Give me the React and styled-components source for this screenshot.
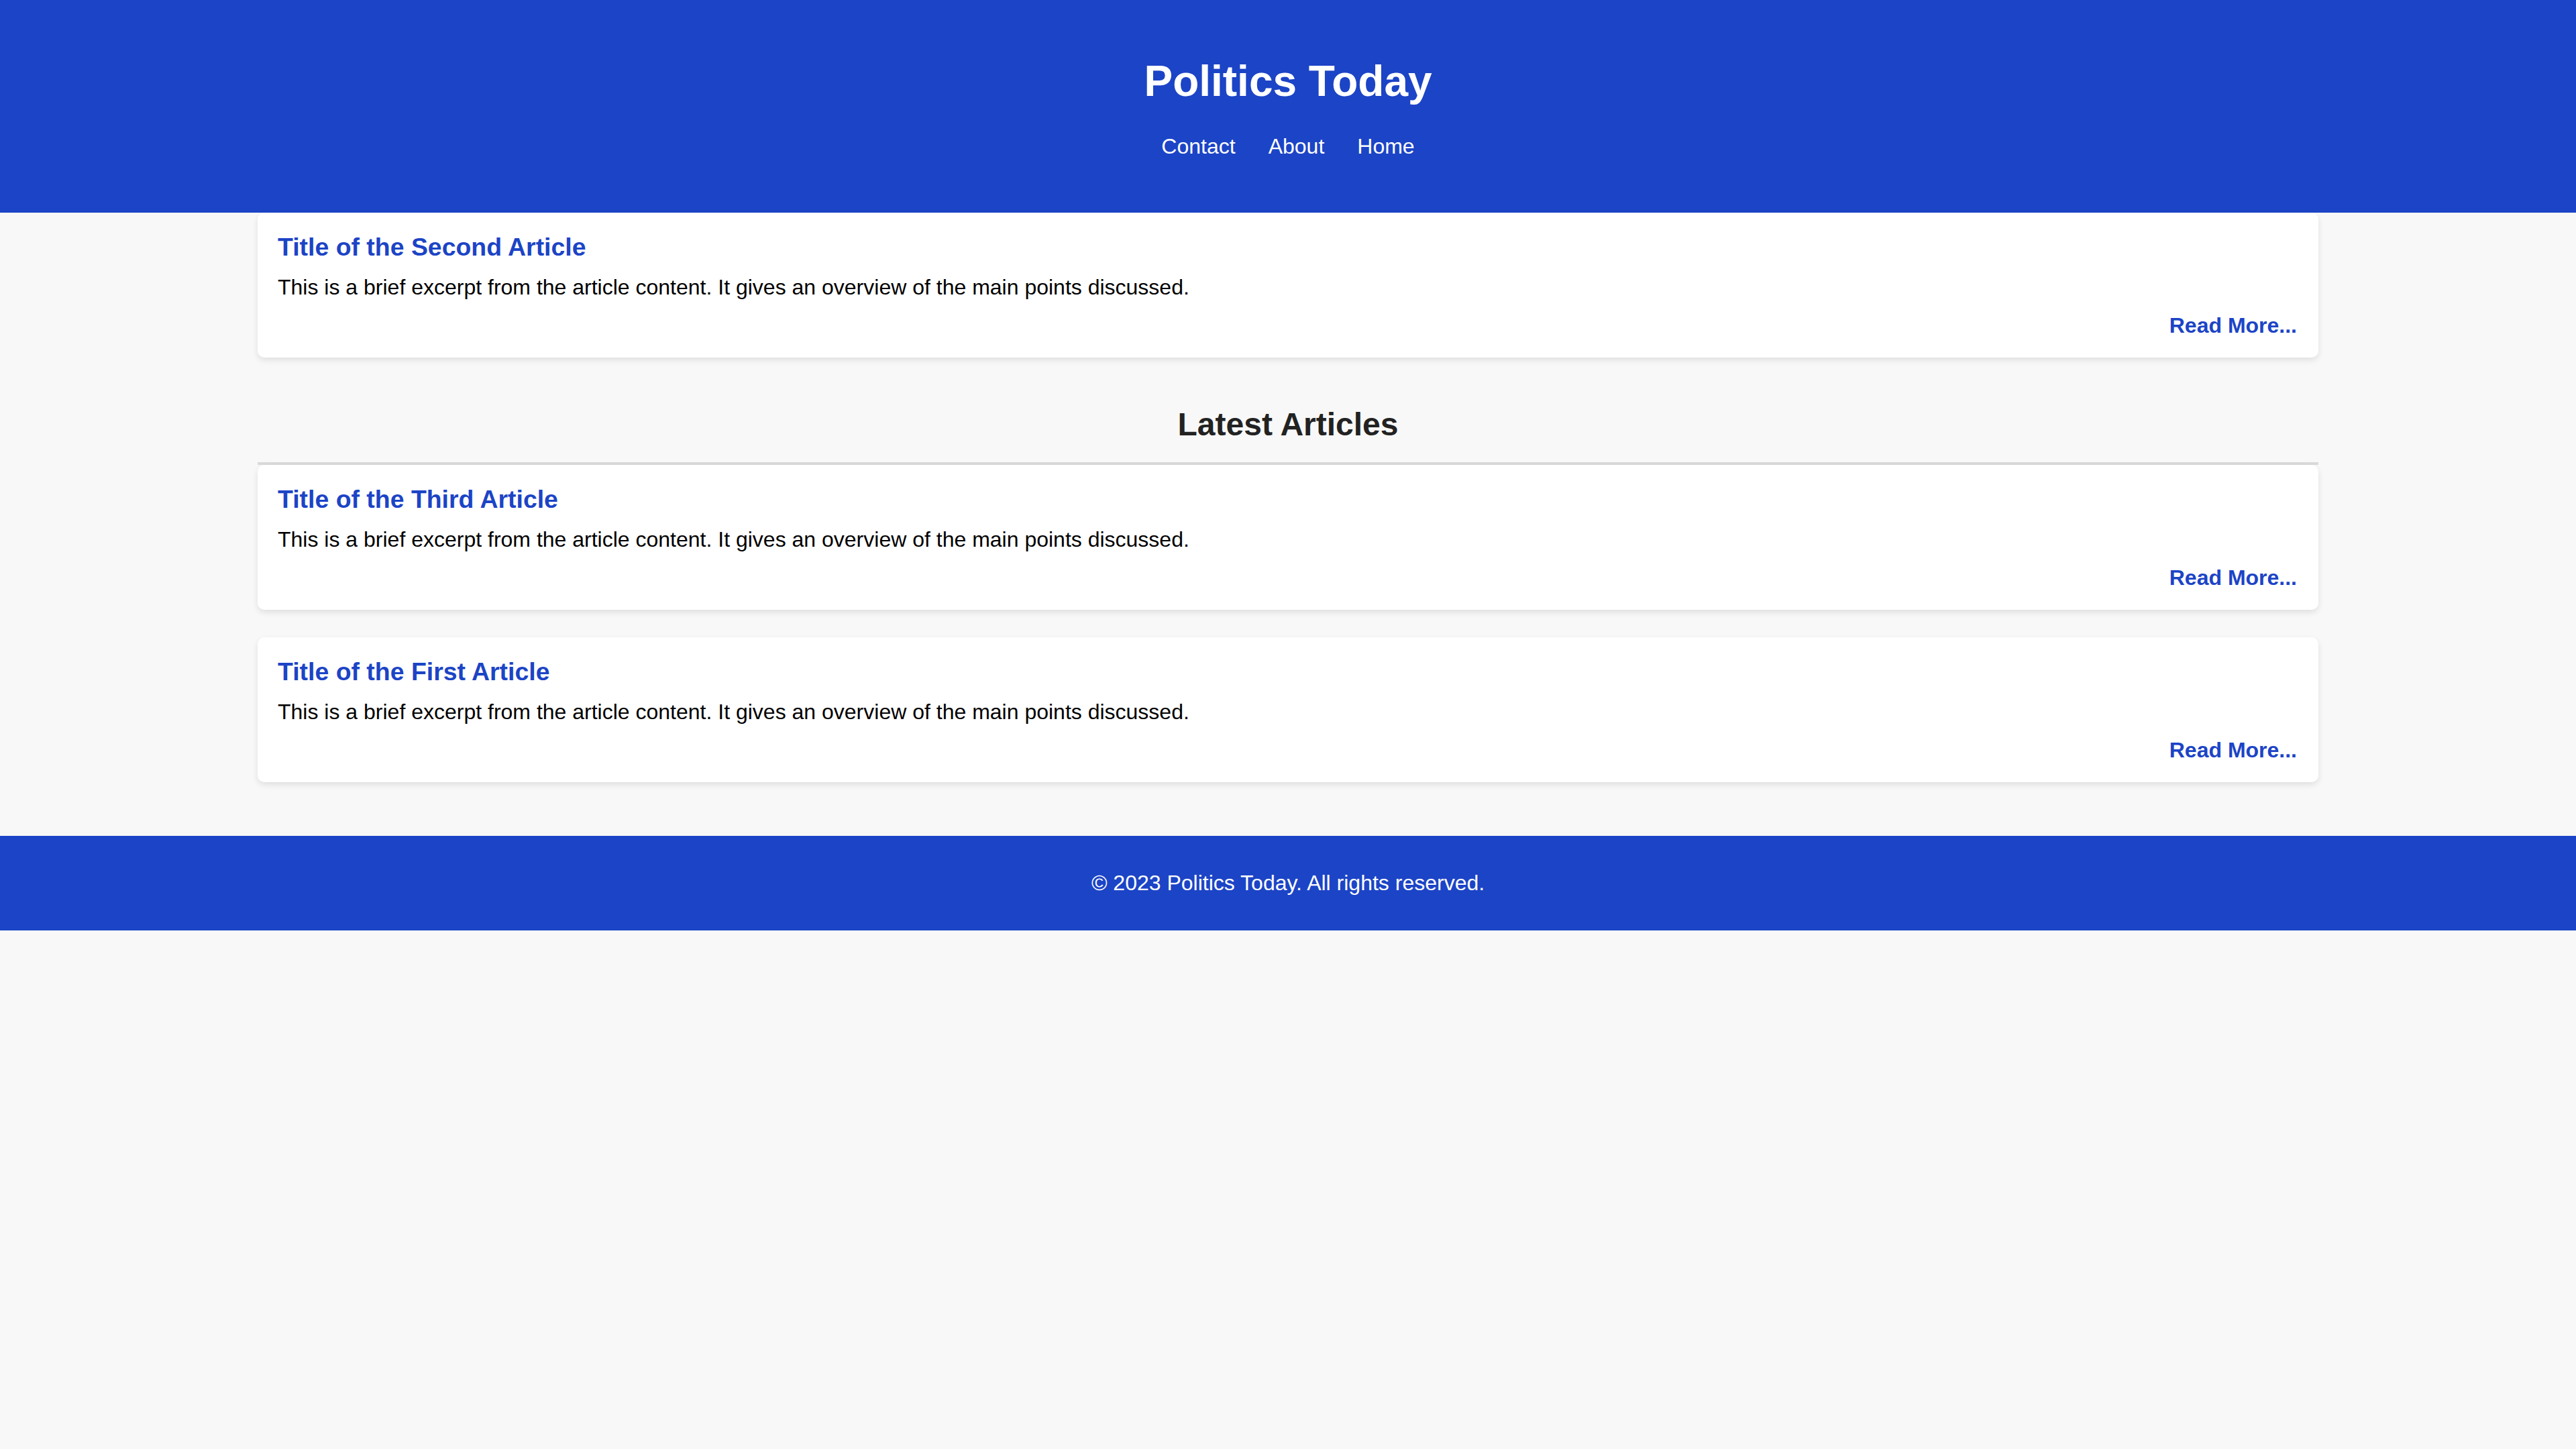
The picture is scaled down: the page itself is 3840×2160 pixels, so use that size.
import React from "react";
import styled, { createGlobalStyle } from "styled-components";

const BLUE = "#1c44c6";

const GlobalStyle = createGlobalStyle`
  html, body {
    margin: 0;
    padding: 0;
    background: #f8f8f8;
  }
  body {
    font-family: "Liberation Sans", Arial, Helvetica, sans-serif;
    color: #000;
  }
  * { box-sizing: border-box; }
`;

const Header = styled.header`
  background: ${BLUE};
  color: #fff;
  text-align: center;
  padding: 84px 0 81px;
`;

const SiteTitle = styled.h1`
  margin: 0 0 42px;
  font-size: 64px;
  line-height: 74px;
  font-weight: 700;
`;

const Nav = styled.nav`
  display: flex;
  justify-content: center;
  gap: 49px;
`;

const NavLink = styled.a`
  color: #fff;
  text-decoration: none;
  font-size: 32px;
  line-height: 36px;
`;

const Main = styled.main`
  width: 3072px;
  margin: 0 auto;
  padding: 0 0 80px;
`;

const Card = styled.article`
  background: #fff;
  border-radius: 10px;
  box-shadow: 0 4px 10px rgba(0, 0, 0, 0.1);
  padding: 30px 32px 30px 30px;
  margin-bottom: ${(p) => (p.$last ? "0" : "41px")};
`;

const CardTitle = styled.h3`
  margin: 0 0 20px;
  color: ${BLUE};
  font-size: 37.44px;
  line-height: 43px;
  font-weight: 700;
`;

const Excerpt = styled.p`
  margin: 0 0 20px;
  font-size: 32px;
  line-height: 37px;
`;

const ReadMore = styled.a`
  display: block;
  text-align: right;
  color: ${BLUE};
  font-weight: 700;
  font-size: 32px;
  line-height: 36px;
  text-decoration: none;
`;

const SectionTitle = styled.h2`
  margin: 72px 0 0;
  padding-bottom: 29px;
  border-bottom: 4px solid #dadada;
  text-align: center;
  color: #222;
  font-size: 48px;
  line-height: 55px;
  font-weight: 700;
`;

const Footer = styled.footer`
  background: ${BLUE};
  color: #fff;
  text-align: center;
  padding: 52px 0;
`;

const FooterText = styled.p`
  margin: 0;
  font-size: 32px;
  line-height: 37px;
`;

const excerpt =
  "This is a brief excerpt from the article content. It gives an overview of the main points discussed.";

function ArticleCard({ title, last }) {
  return (
    <Card $last={last}>
      <CardTitle>{title}</CardTitle>
      <Excerpt>{excerpt}</Excerpt>
      <ReadMore href="#">Read More...</ReadMore>
    </Card>
  );
}

export default function App() {
  return (
    <>
      <GlobalStyle />
      <Header>
        <SiteTitle>Politics Today</SiteTitle>
        <Nav>
          <NavLink href="#">Contact</NavLink>
          <NavLink href="#">About</NavLink>
          <NavLink href="#">Home</NavLink>
        </Nav>
      </Header>
      <Main>
        <ArticleCard title="Title of the Second Article" last />
        <SectionTitle>Latest Articles</SectionTitle>
        <ArticleCard title="Title of the Third Article" />
        <ArticleCard title="Title of the First Article" last />
      </Main>
      <Footer>
        <FooterText>© 2023 Politics Today. All rights reserved.</FooterText>
      </Footer>
    </>
  );
}
